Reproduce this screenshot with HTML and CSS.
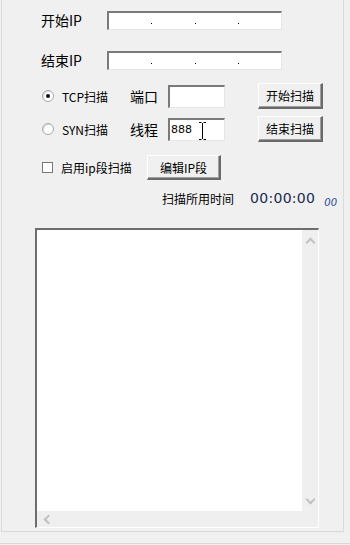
FILE: index.html
```html
<!DOCTYPE html>
<html lang="zh-CN">
<head>
    <meta charset="UTF-8">
    <title>端口扫描</title>
    <link rel="stylesheet" href="styles.css">
</head>
<body>
    <div class="window">
        <div class="ip-row">
            <span class="ip-label">开始IP</span>
            <div class="ip-box">
                <span class="seg"></span><span class="dot"></span>
                <span class="seg"></span><span class="dot"></span>
                <span class="seg"></span><span class="dot"></span>
                <span class="seg"></span>
            </div>
        </div>
        <div class="ip-row second">
            <span class="ip-label">结束IP</span>
            <div class="ip-box">
                <span class="seg"></span><span class="dot"></span>
                <span class="seg"></span><span class="dot"></span>
                <span class="seg"></span><span class="dot"></span>
                <span class="seg"></span>
            </div>
        </div>

        <div class="options">
            <label class="radio"><span class="radio-mark checked"></span>TCP扫描</label>
            <span class="opt-label">端口</span>
            <div class="field"></div>
            <button class="btn">开始扫描</button>

            <label class="radio"><span class="radio-mark"></span>SYN扫描</label>
            <span class="opt-label">线程</span>
            <div class="field">888
                <svg class="ibeam" width="9" height="18" viewBox="0 0 9 18">
                    <path d="M1 0.5h2.5M5.5 0.5H8M4.5 1v16M1 17.5h2.5M5.5 17.5H8" stroke="#000" stroke-width="1" fill="none"/>
                </svg>
            </div>
            <button class="btn">结束扫描</button>
        </div>

        <div class="range-row">
            <label class="check"><span class="check-mark"></span>启用ip段扫描</label>
            <button class="btn edit">编辑IP段</button>
        </div>

        <div class="time-row">
            <span class="time-label">扫描所用时间</span>
            <span class="time">00:00:00</span>
            <span class="ms">00</span>
        </div>

        <div class="output">
            <div class="output-body">
                <div class="text-area"></div>
                <div class="hbar"><span class="chev left"></span></div>
            </div>
            <div class="vbar">
                <span class="chev up"></span>
                <span class="chev down"></span>
            </div>
        </div>
    </div>
    <div class="status-line"></div>
</body>
</html>
```

FILE: styles.css
```css
body { margin: 0; width: 350px; height: 545px; background: #f0f0f0; font-family: "Noto Sans CJK SC", "DejaVu Sans", sans-serif; font-size: 12px; color: #000; overflow: hidden; }
.window { margin-left: 1px; width: 341px; height: 520px; padding-top: 11px; border-left: 1px solid #dadada; border-right: 1px solid #dadada; border-bottom: 1px solid #d8d8d8; }
.status-line { margin-top: 11px; border-top: 1px solid #d8d8d8; }

.ip-row { display: flex; align-items: center; height: 19px; padding-left: 39px; }
.ip-row.second { margin-top: 21px; }
.ip-label { width: 66px; font-size: 14px; line-height: 19px; }
.ip-box { display: flex; align-items: flex-end; width: 172px; height: 16px; background: #fff; border-top: 2px solid #7a7a7a; border-left: 2px solid #7a7a7a; border-right: 1px solid #e6e6e6; border-bottom: 1px solid #e6e6e6; }
.ip-box .seg { flex: 1; }
.ip-box .dot { width: 1px; height: 1px; margin: 0 1px 5px; background: #000; }

.options { display: grid; grid-template-columns: 88px 38px 57px 98px; row-gap: 7px; margin-top: 13px; padding-left: 40px; align-items: center; }
.options .btn { margin-left: 33px; width: 65px; height: 26px; }
.radio { display: flex; align-items: center; height: 25px; }
.radio-mark { width: 10px; height: 10px; margin-right: 8px; border: 1px solid #a8a8a8; border-radius: 50%; background: #fff; box-shadow: inset 1px 1px 0 #dcdcdc; position: relative; }
.radio-mark.checked::after { content: ""; position: absolute; left: 3px; top: 3px; width: 4px; height: 4px; border-radius: 50%; background: #111; }
.opt-label { font-size: 14px; }
.field { position: relative; height: 20px; background: #fff; border-top: 2px solid #7a7a7a; border-left: 2px solid #7a7a7a; border-right: 1px solid #e6e6e6; border-bottom: 1px solid #e6e6e6; font-size: 11px; line-height: 20px; padding-left: 1px; font-family: "DejaVu Sans", sans-serif; }
.ibeam { position: absolute; left: 28px; top: 2px; }

.btn { font-family: inherit; font-size: 12px; padding: 0; color: #000; background: #f0f0f0; border-top: 1px solid #fff; border-left: 1px solid #fff; border-right: 2px solid #6a6a6a; border-bottom: 2px solid #6a6a6a; box-shadow: inset -1px -1px 0 #a0a0a0; white-space: nowrap; }

.range-row { display: flex; align-items: center; margin-top: 13px; padding-left: 40px; height: 25px; }
.check { display: flex; align-items: center; width: 105px; }
.check-mark { width: 9px; height: 9px; margin-right: 8px; border: 1px solid #777; background: #fff; }
.btn.edit { width: 74px; height: 25px; }

.time-row { display: flex; align-items: center; height: 20px; margin-top: 8px; padding-left: 160px; }
.time-label { width: 88px; }
.time { font-family: "DejaVu Sans", sans-serif; font-size: 14px; color: #1b2a52; letter-spacing: 0.3px; }
.ms { margin-left: 9px; margin-top: 9px; font-family: "DejaVu Sans", sans-serif; font-style: italic; font-size: 10px; color: #2a4a90; }

.output { display: flex; margin: 20px 0 0 33px; width: 281px; height: 297px; border-top: 2px solid #6d6d6d; border-left: 2px solid #6d6d6d; border-right: 1px solid #fff; border-bottom: 1px solid #fff; background: #fff; }
.output-body { flex: 1; display: flex; flex-direction: column; }
.text-area { flex: 1; background: #fff; }
.hbar { height: 16px; background: #efefef; display: flex; align-items: center; padding-left: 8px; }
.vbar { width: 16px; background: #efefef; display: flex; flex-direction: column; align-items: center; justify-content: space-between; padding: 6px 0 24px; }
.chev { width: 5px; height: 5px; border-top: 2px solid #c2c2c2; border-left: 2px solid #c2c2c2; }
.chev.up { transform: rotate(45deg); margin-top: 3px; }
.chev.down { transform: rotate(-135deg); }
.chev.left { transform: rotate(-45deg); }
```
